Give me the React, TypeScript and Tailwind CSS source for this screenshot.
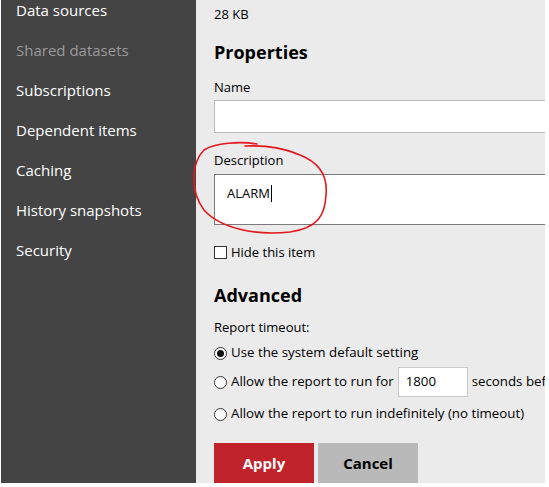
import React from "react";

const font = { fontFamily: '"Open Sans", "Noto Sans", sans-serif' };

const navItems = [
  { label: "Data sources", muted: false },
  { label: "Shared datasets", muted: true },
  { label: "Subscriptions", muted: false },
  { label: "Dependent items", muted: false },
  { label: "Caching", muted: false },
  { label: "History snapshots", muted: false },
  { label: "Security", muted: false },
];

function Radio({ checked }: { checked?: boolean }) {
  return (
    <span className="w-[13px] h-[13px] rounded-full border border-[#333] bg-white flex items-center justify-center shrink-0">
      {checked && <span className="w-[7px] h-[7px] rounded-full bg-[#111]" />}
    </span>
  );
}

export default function App() {
  return (
    <div className="relative w-[549px] h-[487px] bg-white overflow-hidden text-black" style={font}>
      <div className="flex h-[483px] pl-[1px] pr-[4px]">
        {/* Sidebar */}
        <div className="w-[195px] bg-[#444444] shrink-0 overflow-hidden">
          <div className="flex flex-col mt-[-10px]">
            {navItems.map((item) => (
              <div
                key={item.label}
                className={`h-[40px] flex items-center pl-[15px] text-[15px] ${
                  item.muted ? "text-[#9a9a9a]" : "text-white"
                }`}
              >
                {item.label}
              </div>
            ))}
          </div>
        </div>

        {/* Content */}
        <div className="flex-1 bg-[#ebebeb] pl-[18px] overflow-hidden">
          <div className="text-[13px] leading-[20px] mt-[4px]">28 KB</div>

          <h2 className="text-[18px] font-bold leading-[24px] mt-[16px]">Properties</h2>

          <div className="text-[13px] leading-[20px] mt-[13px]">Name</div>
          <div className="h-[33px] bg-white border border-[#bcbcbc] mt-[3px] w-[400px]" />

          <div className="text-[13px] leading-[20px] mt-[17px]">Description</div>
          <div className="h-[51px] bg-white border border-[#7a7a7a] mt-[4px] w-[400px] pl-[12px] pt-[5px]">
            <span className="text-[13px] leading-[20px]">ALARM</span>
            <span className="inline-block w-[1px] h-[17px] bg-black align-middle ml-[1px]" />
          </div>

          <div className="flex items-center gap-[4px] mt-[20px] h-[14px]">
            <span className="w-[13px] h-[13px] bg-white border border-[#333] shrink-0" />
            <span className="text-[13px] leading-[20px]">Hide this item</span>
          </div>

          <h2 className="text-[18px] font-bold leading-[24px] mt-[24px]">Advanced</h2>

          <div className="text-[13px] leading-[20px] mt-[10px]">Report timeout:</div>

          <div className="flex items-center gap-[4px] mt-[6px] h-[20px]">
            <Radio checked />
            <span className="text-[13.3px] whitespace-nowrap">Use the system default setting</span>
          </div>

          <div className="flex items-center gap-[4px] mt-[4px] h-[30px] whitespace-nowrap">
            <Radio />
            <span className="text-[13.3px]">Allow the report to run for</span>
            <div className="w-[70px] h-[30px] bg-white border border-[#c8c8c8] pl-[7px] flex items-center text-[13.3px] shrink-0">
              1800
            </div>
            <span className="text-[13.3px]">seconds before timing out</span>
          </div>

          <div className="flex items-center gap-[4px] mt-[7px] h-[20px]">
            <Radio />
            <span className="text-[13.3px] whitespace-nowrap">Allow the report to run indefinitely (no timeout)</span>
          </div>

          <div className="flex gap-[4px] mt-[19px]">
            <button className="w-[100px] h-[41px] bg-[#c1232b] text-white font-bold text-[15px]">Apply</button>
            <button className="w-[100px] h-[41px] bg-[#b9b9b9] text-black font-bold text-[15px]">Cancel</button>
          </div>
        </div>
      </div>

      {/* hand-drawn annotation */}
      <svg className="absolute left-0 top-0 pointer-events-none" width="549" height="487">
        <path
          d="M 257 144 C 240 141, 215 143, 204 150 C 192 162, 189 190, 204 210 C 220 228, 255 236, 290 232 C 318 228, 325 215, 326 195 C 328 175, 318 162, 300 155 C 285 149, 270 145, 245 146"
          fill="none"
          stroke="#e3171c"
          strokeWidth="1.6"
          strokeLinecap="round"
        />
      </svg>
    </div>
  );
}
